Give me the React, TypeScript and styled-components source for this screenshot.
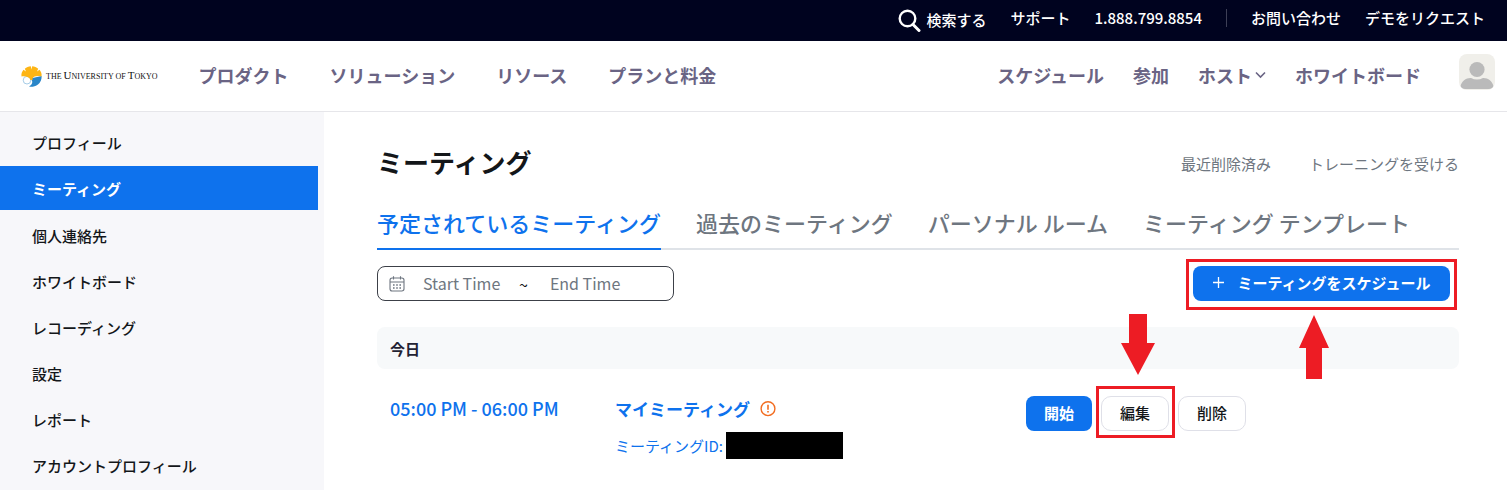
import React from "react";
import styled, { createGlobalStyle } from "styled-components";

const blue = "#0e72ed";
const red = "#ed1c24";

const GlobalStyle = createGlobalStyle`
  *, *::before, *::after { box-sizing: border-box; }
  body {
    margin: 0;
    background: #fff;
    color: #131619;
    font-family: "Noto Sans CJK JP", sans-serif;
    font-size: 15px;
    line-height: 24px;
  }
  a { color: inherit; text-decoration: none; }
  button, input { font: inherit; }
  h1, h2, h3, p, ul { margin: 0; padding: 0; }
  ul { list-style: none; }
`;

const Page = styled.div`
  display: flex;
  flex-direction: column;
  min-height: 100vh;
`;

const TopBar = styled.div`
  display: flex;
  justify-content: flex-end;
  align-items: center;
  gap: 24px;
  height: 41px;
  padding: 0 22px 5px 0;
  background: #00031f;
  color: #fff;
  font-weight: 500;
  white-space: nowrap;
`;

const SearchButton = styled.button`
  display: flex;
  align-items: center;
  gap: 5px;
  padding: 4px 0 0;
  border: 0;
  background: none;
  color: inherit;
`;

const Separator = styled.span`
  width: 1px;
  height: 18px;
  background: #3d3f56;
`;

const Header = styled.header`
  display: flex;
  align-items: center;
  justify-content: space-between;
  height: 71px;
  padding: 0 12px 0 21px;
  border-bottom: 1px solid #e6e6ea;
`;

const HeaderSide = styled.div`
  display: flex;
  align-items: center;
`;

const Logo = styled.a`
  display: flex;
  align-items: center;
  gap: 4px;
  margin-right: 41px;
  font-family: "Liberation Serif", serif;
  font-size: 8px;
  line-height: 16px;
  color: #111;
  white-space: nowrap;
`;

const Initial = styled.span`
  font-size: 11px;
`;

const Nav = styled.nav<{ $gap: number }>`
  display: flex;
  gap: ${(p) => p.$gap}px;
  padding-bottom: 2px;
  color: #6a6484;
  font-size: 18px;
  font-weight: 700;
  white-space: nowrap;
`;

const NavLink = styled.a`
  display: flex;
  align-items: center;
  gap: 3px;
`;

const Avatar = styled.button`
  display: block;
  width: 36px;
  height: 36px;
  margin: 0 0 8px 38px;
  padding: 0;
  border: 0;
  border-radius: 8px;
  overflow: hidden;
  background: #f0efea;
`;

const Body = styled.div`
  display: flex;
  flex: 1;
`;

const Sidebar = styled.nav`
  flex: 0 0 324px;
  padding: 8px 6px 0 0;
  background: #f7f7fa;
`;

const SideList = styled.ul`
  display: flex;
  flex-direction: column;
  gap: 2px;
`;

const SideItem = styled.li<{ $active?: boolean }>`
  margin-bottom: ${(p) => (p.$active ? 1 : 0)}px;
  background: ${(p) => (p.$active ? blue : "transparent")};
  color: ${(p) => (p.$active ? "#fff" : "#131619")};
  font-weight: ${(p) => (p.$active ? 700 : 500)};
`;

const SideLink = styled.a`
  display: block;
  padding: 11px 32px 9px;
`;

const Main = styled.main`
  flex: 1;
  min-width: 0;
  padding: 31px 48px 0 53px;
`;

const TitleRow = styled.div`
  display: flex;
  align-items: center;
  justify-content: space-between;
`;

const Title = styled.h1`
  font-size: 26px;
  line-height: 38px;
  font-weight: 700;
`;

const HelpLinks = styled.div`
  display: flex;
  gap: 38px;
  padding-top: 4px;
  color: #6e7680;
`;

const Tabs = styled.div`
  display: flex;
  gap: 35px;
  margin-top: 25px;
  border-bottom: 2px solid #dfe3e8;
`;

const Tab = styled.button<{ $active?: boolean }>`
  margin-bottom: -2px;
  padding: 0 0 10px;
  border: 0;
  border-bottom: 2px solid ${(p) => (p.$active ? blue : "transparent")};
  background: none;
  color: ${(p) => (p.$active ? blue : "#6e7680")};
  font-size: 22px;
  line-height: 32px;
  font-weight: 500;
  white-space: nowrap;
`;

const FilterRow = styled.div`
  display: flex;
  justify-content: space-between;
  margin-top: 16px;
  padding-right: 9px;
`;

const DateRange = styled.div`
  display: flex;
  align-items: center;
  gap: 18px;
  width: 297px;
  height: 35px;
  padding: 0 11px;
  border: 1px solid #3c4048;
  border-radius: 8px;
  font-size: 16px;
`;

const DateInput = styled.input`
  width: 78px;
  padding: 0 0 1px;
  border: 0;
  outline: 0;
  background: none;
  &::placeholder { color: #6e7680; opacity: 1; }
`;

const RangeMark = styled.span`
  margin-right: 4px;
`;

const Button = styled.button<{ $primary?: boolean; $minWidth?: number }>`
  display: flex;
  align-items: center;
  justify-content: center;
  gap: 12px;
  min-width: ${(p) => p.$minWidth ?? 66}px;
  height: 35px;
  padding: 0 18px 2px;
  border: ${(p) => (p.$primary ? "0" : "1px solid #dfe0e8")};
  border-radius: ${(p) => (p.$primary ? 8 : 10)}px;
  background: ${(p) => (p.$primary ? blue : "#fff")};
  color: ${(p) => (p.$primary ? "#fff" : "#131619")};
  font-weight: ${(p) => (p.$primary ? 700 : 500)};
  white-space: nowrap;
`;

const Marked = styled.div`
  position: relative;
`;

const MarkBox = styled.span<{ $inset: string }>`
  position: absolute;
  inset: ${(p) => p.$inset};
  border: 3px solid ${red};
  pointer-events: none;
`;

const MarkArrow = styled.svg<{ $side: "above" | "below" }>`
  position: absolute;
  z-index: 1;
  ${(p) => (p.$side === "above" ? "bottom: 56px; left: 20px;" : "top: 49px; left: 106px;")}
`;

const DayHeading = styled.h2`
  margin-top: 26px;
  padding: 10px 13px 8px;
  border-radius: 8px;
  background: #f7f9fa;
  color: #232333;
  font-size: 15px;
  line-height: 24px;
  font-weight: 700;
`;

const Meeting = styled.article`
  display: grid;
  grid-template-columns: 225fr 411fr 433fr;
  align-items: start;
  padding: 27px 0 0 13px;
  color: ${blue};
`;

const MeetingTime = styled.p`
  font-size: 18px;
  line-height: 24px;
  font-weight: 500;
`;

const MeetingName = styled.h3`
  display: flex;
  align-items: center;
  gap: 10px;
  font-size: 17px;
  line-height: 26px;
  font-weight: 700;
`;

const MeetingId = styled.p`
  display: flex;
  align-items: center;
  gap: 3px;
  margin-top: 10px;
`;

const Redacted = styled.span`
  width: 117px;
  height: 27px;
  background: #000;
`;

const Actions = styled.div`
  display: flex;
  gap: 9px;
`;

const sideItems = [
  "プロフィール",
  "ミーティング",
  "個人連絡先",
  "ホワイトボード",
  "レコーディング",
  "設定",
  "レポート",
  "アカウントプロフィール",
];

const tabs = [
  "予定されているミーティング",
  "過去のミーティング",
  "パーソナル ルーム",
  "ミーティング テンプレート",
];

const SearchIcon = () => (
  <svg width="23" height="23" viewBox="0 0 23 23" fill="none" stroke="#fff" aria-hidden="true">
    <circle cx="9.5" cy="9.5" r="7.8" strokeWidth="2.4" />
    <path d="M15 15.5l6 6" strokeWidth="3" strokeLinecap="round" />
  </svg>
);

const GinkgoLogo = () => (
  <svg width="21" height="21" viewBox="0 0 21 21" aria-hidden="true">
    <path d="M11.5 12L20.6 10A10 10 0 0 1 8 20.4C11.5 18.5 12.5 15 9.5 13Z" fill="#2a86c8" />
    <circle cx="6" cy="14.2" r="3.8" fill="#fff" stroke="#8fbfdf" strokeWidth="0.8" />
    <path
      d="M9.5 14C8.5 11 4.5 9.8 0.5 10.5C0 8 1 5.5 2.5 3.8L5 5.5L3.8 2.8C5.5 1.3 7.5 .5 9.8 .3L10.5 3.5L11.2 .3C13.5 .5 15.5 1.3 17.2 2.8L16 5.5L18.5 3.8C20 5.5 21 8 20.5 10.5C16.5 9.5 13 10 11.5 12.5L11.5 14Z"
      fill="#fdb515"
    />
  </svg>
);

const ChevronIcon = () => (
  <svg width="11" height="8" viewBox="0 0 11 8" fill="none" stroke="#6a6484" strokeWidth="1.6" aria-hidden="true">
    <path d="M1 1.5l4.5 4.5L10 1.5" />
  </svg>
);

const CalendarIcon = () => (
  <svg width="16" height="16" viewBox="0 0 16 16" fill="none" stroke="#6e7680" strokeWidth="1.1" aria-hidden="true">
    <rect x="1" y="2" width="14" height="13" rx="2.2" />
    <path d="M1 6h14M4.5 .3v3.2M11.5 .3v3.2" />
    <path d="M4 9h1.6M7.2 9h1.6M10.4 9H12M4 12h1.6M7.2 12h1.6M10.4 12H12" strokeWidth="1.5" />
  </svg>
);

const PlusIcon = () => (
  <svg width="13" height="13" viewBox="0 0 13 13" stroke="#fff" strokeWidth="1.3" aria-hidden="true">
    <path d="M6.5 1v11M1 6.5h11" />
  </svg>
);

const AlertIcon = () => (
  <svg width="16" height="16" viewBox="0 0 16 16" fill="none" stroke="#f26d21" strokeWidth="1.4" aria-hidden="true">
    <circle cx="8" cy="7.7" r="6.9" />
    <path d="M8 3.8v5M8 10.1v1.5" strokeWidth="1.6" />
  </svg>
);

export default function App() {
  return (
    <Page>
      <GlobalStyle />
      <TopBar>
        <SearchButton type="button">
          <SearchIcon />
          検索する
        </SearchButton>
        <a href="#support">サポート</a>
        <a href="tel:18887998854">1.888.799.8854</a>
        <Separator />
        <a href="#contact">お問い合わせ</a>
        <a href="#demo">デモをリクエスト</a>
      </TopBar>

      <Header>
        <HeaderSide>
          <Logo href="#home">
            <GinkgoLogo />
            <span>
              THE <Initial>U</Initial>NIVERSITY OF <Initial>T</Initial>OKYO
            </span>
          </Logo>
          <Nav $gap={41}>
            <NavLink href="#products">プロダクト</NavLink>
            <NavLink href="#solutions">ソリューション</NavLink>
            <NavLink href="#resources">リソース</NavLink>
            <NavLink href="#pricing">プランと料金</NavLink>
          </Nav>
        </HeaderSide>
        <HeaderSide>
          <Nav $gap={29}>
            <NavLink href="#schedule">スケジュール</NavLink>
            <NavLink href="#join">参加</NavLink>
            <NavLink href="#host">
              ホスト
              <ChevronIcon />
            </NavLink>
            <NavLink href="#whiteboard">ホワイトボード</NavLink>
          </Nav>
          <Avatar type="button" aria-label="アカウント">
            <svg width="36" height="36" viewBox="0 0 36 36" fill="#bababa" aria-hidden="true">
              <circle cx="18" cy="15.5" r="7.6" />
              <path d="M1.5 32.5C2.5 27 7 23.8 12 24Q18 27 24 24C29 23.8 33.5 27 34.5 32.5Q33 35 30 35H6Q3 35 1.5 32.5Z" />
            </svg>
          </Avatar>
        </HeaderSide>
      </Header>

      <Body>
        <Sidebar>
          <SideList>
            {sideItems.map((label, i) => (
              <SideItem key={label} $active={i === 1}>
                <SideLink href="#menu">{label}</SideLink>
              </SideItem>
            ))}
          </SideList>
        </Sidebar>

        <Main>
          <TitleRow>
            <Title>ミーティング</Title>
            <HelpLinks>
              <a href="#deleted">最近削除済み</a>
              <a href="#training">トレーニングを受ける</a>
            </HelpLinks>
          </TitleRow>

          <Tabs role="tablist">
            {tabs.map((label, i) => (
              <Tab key={label} type="button" role="tab" aria-selected={i === 0} $active={i === 0}>
                {label}
              </Tab>
            ))}
          </Tabs>

          <FilterRow>
            <DateRange>
              <CalendarIcon />
              <DateInput type="text" placeholder="Start Time" aria-label="Start Time" />
              <RangeMark>~</RangeMark>
              <DateInput type="text" placeholder="End Time" aria-label="End Time" />
            </DateRange>
            <Marked>
              <Button type="button" $primary $minWidth={257}>
                <PlusIcon />
                ミーティングをスケジュール
              </Button>
              <MarkBox $inset="-7px -7px -9px" />
              <MarkArrow $side="below" width="30" height="64" viewBox="0 0 30 64" aria-hidden="true">
                <path d="M15 0L30 33H23V64H7V33H0Z" fill={red} />
              </MarkArrow>
            </Marked>
          </FilterRow>

          <DayHeading>今日</DayHeading>

          <Meeting>
            <MeetingTime>05:00 PM - 06:00 PM</MeetingTime>
            <div>
              <MeetingName>
                <a href="#meeting">マイミーティング</a>
                <AlertIcon />
              </MeetingName>
              <MeetingId>
                ミーティングID:
                <Redacted />
              </MeetingId>
            </div>
            <Actions>
              <Button type="button" $primary>開始</Button>
              <Marked>
                <Button type="button">編集</Button>
                <MarkBox $inset="-10px -6px -7px -5px" />
                <MarkArrow $side="above" width="34" height="61" viewBox="0 0 34 61" aria-hidden="true">
                  <path d="M8 0H26V29H34L17 61L0 29H8Z" fill={red} />
                </MarkArrow>
              </Marked>
              <Button type="button">削除</Button>
            </Actions>
          </Meeting>
        </Main>
      </Body>
    </Page>
  );
}
